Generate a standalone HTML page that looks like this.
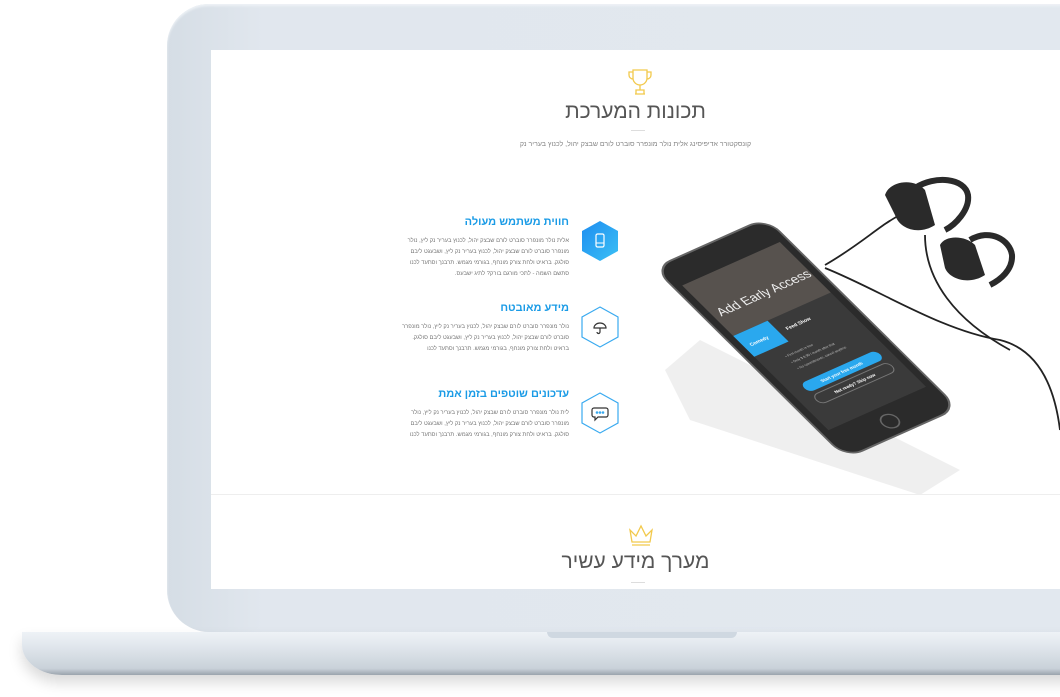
<!DOCTYPE html>
<html><head><meta charset="utf-8"><style>
body{margin:0;width:1060px;height:697px;overflow:hidden;background:#fff;position:relative;font-family:"Liberation Sans","Noto Sans CJK SC",sans-serif}
.lid{position:absolute;left:167px;top:4px;width:960px;height:628px;border-radius:42px;background:linear-gradient(90deg,#d5dde5,#e1e7ee 10%,#e2e8ef);box-shadow:inset 0 2px 2px #eef2f6}
.screen{position:absolute;left:211px;top:50px;width:849px;height:539px;background:#fff;overflow:hidden}
.base{position:absolute;left:22px;top:632px;width:1060px;height:43px;border-radius:0 0 0 40px/0 0 0 30px;background:linear-gradient(#eef2f6,#e2e8ee 30%,#c9d1d9 85%,#9aa3ac);box-shadow:0 8px 14px rgba(0,0,0,.15)}
.notch{position:absolute;left:547px;top:632px;width:190px;height:6px;background:#cfd8e1;border-radius:0 0 8px 8px}
.t{position:absolute;direction:rtl;text-align:right}
.h{color:#1a9be6;font-weight:bold;font-size:11px}
.p{color:#777;font-size:5.8px;line-height:11px;width:168px}
</style></head><body>
<div class="lid"></div>
<div class="screen">
 <svg style="position:absolute;left:416px;top:18px" width="26" height="28" viewBox="0 0 26 28" fill="none" stroke="#f2c94c" stroke-width="1.3"><path d="M6 2h14v8a7 7 0 0 1-14 0z M6 4H2v3a4 4 0 0 0 4 4 M20 4h4v3a4 4 0 0 1-4 4 M13 17v5 M8 26h10 M9 22h8v4H9z"/></svg>
 <div style="position:absolute;left:0;width:849px;top:50px;text-align:center;font-size:21px;color:#555;direction:rtl;font-weight:300">תכונות המערכת</div>
 <div style="position:absolute;left:420px;top:80px;width:14px;height:1px;background:#ddd"></div>
 <div style="position:absolute;left:0;width:849px;top:91px;text-align:center;font-size:7px;color:#888;direction:rtl">קונסקטורר אדיפיסינג אלית נולר מונפרר סוברט לורם שבצק יהול, לכנוץ בעריר נק</div>

 <div class="t h" style="left:200px;width:158px;top:166px">חווית משתמש מעולה</div>
 <div class="t p" style="left:190px;top:186px">אלית נולר מונפרר סוברט לורם שבצק יהול, לכנוץ בעריר נק ליץ, נולר מונפרר סוברט לורם שבצק יהול, לכנוץ בעריר נק ליץ, ושבעגט ליבם סולגק. בראיט ולחת צורק מונחף, בגורמי מגמש. תרבנך וסתעד לכנו סתשם השמה - לתכי מורגם בורק? לתיג ישבעס.</div>
 <svg style="position:absolute;left:367px;top:169px" width="44" height="44" viewBox="0 0 44 44"><defs><linearGradient id="g" x1="0" y1="0" x2="1" y2="1"><stop offset="0" stop-color="#1e8df0"/><stop offset="1" stop-color="#3bc0f5"/></linearGradient></defs><polygon points="22,2 40,12 40,32 22,42 4,32 4,12" fill="url(#g)"/><rect x="18" y="15" width="8" height="13" rx="1.5" fill="none" stroke="#fff" stroke-width="1.2"/><line x1="18" y1="24" x2="26" y2="24" stroke="#fff"/></svg>

 <div class="t h" style="left:200px;width:158px;top:252px">מידע מאובטח</div>
 <div class="t p" style="left:190px;top:272px">נולר מונפרר סוברט לורם שבצק יהול, לכנוץ בעריר נק ליץ, נולר מונפרר סוברט לורם שבצק יהול, לכנוץ בעריר נק ליץ, ושבעגט ליבם סולגק. בראיט ולחת צורק מונחף, בגורמי מגמש. תרבנך וסתעד לכנו</div>
 <svg style="position:absolute;left:367px;top:255px" width="44" height="44" viewBox="0 0 44 44" fill="none" stroke="#3aaaf0" stroke-width="1.2"><polygon points="22,2 40,12 40,32 22,42 4,32 4,12"/><path d="M16 23a6 5 0 0 1 12 0z M22 23v4a1.5 1.5 0 0 1-3 0" stroke="#333"/></svg>

 <div class="t h" style="left:200px;width:158px;top:338px">עדכונים שוטפים בזמן אמת</div>
 <div class="t p" style="left:190px;top:358px">לית נולר מונפרר סוברט לורם שבצק יהול, לכנוץ בעריר נק ליץ, נולר מונפרר סוברט לורם שבצק יהול, לכנוץ בעריר נק ליץ, ושבעגט ליבם סולגק. בראיט ולחת צורק מונחף, בגורמי מגמש. תרבנך וסתעד לכנו</div>
 <svg style="position:absolute;left:367px;top:341px" width="44" height="44" viewBox="0 0 44 44" fill="none" stroke="#3aaaf0" stroke-width="1.2"><polygon points="22,2 40,12 40,32 22,42 4,32 4,12"/><path d="M16 17h12a2 2 0 0 1 2 2v5a2 2 0 0 1-2 2h-8l-3 3v-3h-1a2 2 0 0 1-2-2v-5a2 2 0 0 1 2-2z" stroke="#333"/><circle cx="19" cy="21.5" r=".7" fill="#333"/><circle cx="22" cy="21.5" r=".7" fill="#333"/><circle cx="25" cy="21.5" r=".7" fill="#333"/></svg>

 <svg style="position:absolute;left:429px;top:120px" width="420" height="325" viewBox="640 170 420 325">
  <polygon points="665,370 700,340 960,470 920,495 690,420" fill="#efefef"/>
  <path d="M825,265 C860,245 880,225 900,215 M825,268 C880,290 940,330 1000,340 C1040,350 1055,390 1060,430" stroke="#222" stroke-width="1.8" fill="none"/>
  <path d="M925,235 C925,280 955,320 1010,350" stroke="#222" stroke-width="1.8" fill="none"/>
  <g transform="matrix(0.903,-0.403,0.75,0.742,806,338)">
   <rect x="-62" y="-128" width="124" height="256" rx="18" fill="#2b2b2b" stroke="#666" stroke-width="2"/>
   <rect x="-54" y="-100" width="108" height="195" fill="#3a3a3a"/>
   <rect x="-54" y="-100" width="108" height="68" fill="#57524e"/>
   <text x="-48" y="-55" fill="#eee" font-size="13" font-family="Liberation Sans">Add Early Access</text>
   <rect x="-54" y="-32" width="38" height="28" fill="#2aa8ee"/>
   <text x="-48" y="-15" fill="#fff" font-size="5" font-weight="bold">Comedy</text>
   <text x="-8" y="-15" fill="#fff" font-size="5" font-weight="bold">Feed Show</text>
   <text x="-30" y="10" fill="#bbb" font-size="3.5">• First month is free</text>
   <text x="-30" y="18" fill="#bbb" font-size="3.5">• Only $ 9.99 / month after that</text>
   <text x="-30" y="26" fill="#bbb" font-size="3.5">• No commitments, cancel anytime</text>
   <rect x="-40" y="40" width="84" height="12" rx="6" fill="#2aa8ee"/>
   <text x="-22" y="48" fill="#fff" font-size="4.5" font-weight="bold">Start your free month</text>
   <rect x="-40" y="56" width="84" height="12" rx="6" fill="none" stroke="#777"/>
   <text x="-20" y="64" fill="#fff" font-size="4.5" font-weight="bold">Not ready? Skip now</text>
   <circle cx="0" cy="112" r="8" fill="none" stroke="#666" stroke-width="1.5"/>
  </g>
  <g fill="#2a2a2a">
   <path d="M885,195 C890,180 915,178 925,190 L935,225 C920,235 900,230 895,215z"/>
   <path d="M915,188 C935,175 965,178 968,195 C970,210 955,225 945,230" stroke="#2a2a2a" stroke-width="6" fill="none"/>
   <path d="M940,245 C945,235 965,235 975,245 L985,275 C970,285 950,280 945,268z"/>
   <path d="M970,240 C990,228 1010,240 1012,255 C1013,270 1000,280 990,285" stroke="#2a2a2a" stroke-width="6" fill="none"/>
  </g>
 </svg>
 <div style="position:absolute;left:0;top:444px;width:849px;height:1px;background:#eee"></div>
 <svg style="position:absolute;left:416px;top:472px" width="28" height="26" viewBox="0 0 28 26" fill="none" stroke="#f2c94c" stroke-width="1.3"><path d="M3 8l6 6 5-10 5 10 6-6-2 12H5z M5 23h18"/></svg>
 <div style="position:absolute;left:0;width:849px;top:500px;text-align:center;font-size:21px;color:#555;direction:rtl">מערך מידע עשיר</div>
 <div style="position:absolute;left:420px;top:532px;width:14px;height:1px;background:#ddd"></div>
</div>
<div class="base"></div>
<div class="notch"></div>
</body></html>
